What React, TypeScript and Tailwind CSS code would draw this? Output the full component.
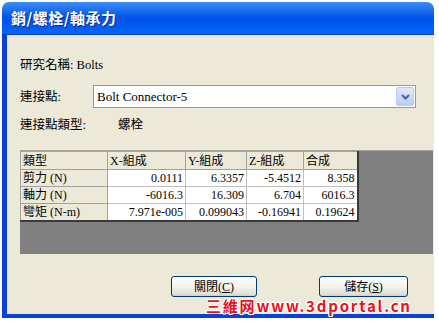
import React from 'react';

const ui = { fontFamily: '"Liberation Serif", "Noto Sans CJK TC", serif' };

// rows of the force table
const rows = [
  { name: '剪力 (N)', x: '0.0111', y: '6.3357', z: '-5.4512', r: '8.358' },
  { name: '軸力 (N)', x: '-6016.3', y: '16.309', z: '6.704', r: '6016.3' },
  { name: '彎矩 (N-m)', x: '7.971e-005', y: '0.099043', z: '-0.16941', r: '0.19624' },
];

const XpButton = ({ label, hot, width }: { label: string; hot: string; width: string }) => (
  <button
    className={`h-[21px] ${width} rounded-[3px] border border-[#003c74] bg-gradient-to-b from-white via-[#f4f3ee] to-[#dcd9cd] text-[12px] leading-none text-black shadow-[inset_0_-1px_0_#d6d0c5]`}
    style={ui}
  >
    {label}(<span className="underline">{hot}</span>)
  </button>
);

const App = () => {
  return (
    <div className="w-[439px] h-[322px] bg-white overflow-hidden relative" style={ui}>
      {/* Window */}
      <div className="ml-[2px] mt-[2px] w-[432px] h-[316px] flex flex-col overflow-hidden rounded-t-[7px]">
        {/* Title bar */}
        <div className="h-[33px] flex items-center pl-[9px] bg-gradient-to-b from-[#3b8cf5] via-[#0052e8] to-[#0864fa] border-b border-[#003fc8] shrink-0">
          <span
            className="text-white font-bold text-[15px] tracking-[0.5px]"
            style={{ fontFamily: '"Noto Sans CJK TC", sans-serif', textShadow: '1px 1px 0 #0a2a8a' }}
          >
            銷/螺栓/軸承力
          </span>
        </div>

        {/* Body with blue frame on left and bottom */}
        <div className="flex-1 flex flex-col border-l-[5px] border-b-[4px] border-[#0843d6] bg-[#ece9d8]">
          <div className="pl-[13px] pt-[23px] text-[12.5px] text-black leading-[14px]">研究名稱: Bolts</div>

          <div className="flex items-center pl-[13px] mt-[13px]">
            <span className="w-[73px] text-[12.5px] leading-[14px]">連接點:</span>
            <div className="h-[23px] w-[323px] border border-[#7f9db9] bg-white flex items-center justify-between pl-[3px] pr-[1px]">
              <span className="text-[13px]">Bolt Connector-5</span>
              <div className="w-[18px] h-[19px] rounded-[2px] border border-[#b8ccf0] bg-gradient-to-b from-[#dfe9fd] to-[#b5cdf7] flex items-center justify-center">
                <svg width="9" height="6" viewBox="0 0 9 6">
                  <path d="M1 1 L4.5 4.5 L8 1" stroke="#4d6185" strokeWidth="2" fill="none" />
                </svg>
              </div>
            </div>
          </div>

          <div className="flex items-center pl-[13px] mt-[10px] text-[12.5px] leading-[14px]">
            <span className="w-[98px]">連接點類型:</span>
            <span>螺栓</span>
          </div>

          {/* Grid area */}
          <div className="ml-[13px] mr-[1px] mt-[18px] h-[104px] bg-[#808080] border-t border-[#a8a498]">
            <table className="border-collapse text-[12px] leading-none border-r-2 border-b-2 border-[#3a3a3a] bg-white">
              <thead>
                <tr className="h-[18px] bg-[#ece9d8]">
                  <th className="w-[87px] border border-[#a0a0a0] text-left font-normal pl-[2px]">類型</th>
                  <th className="w-[78px] border border-[#a0a0a0] text-left font-normal pl-[2px]">X-組成</th>
                  <th className="w-[61px] border border-[#a0a0a0] text-left font-normal pl-[2px]">Y-組成</th>
                  <th className="w-[57px] border border-[#a0a0a0] text-left font-normal pl-[2px]">Z-組成</th>
                  <th className="w-[54px] border border-[#a0a0a0] text-left font-normal pl-[2px]">合成</th>
                </tr>
              </thead>
              <tbody>
                {rows.map((r) => (
                  <tr key={r.name} className="h-[17px]">
                    <td className="border border-[#a0a0a0] bg-[#ece9d8] pl-[2px]">{r.name}</td>
                    <td className="border border-[#c0c0c0] text-right pr-[2px]">{r.x}</td>
                    <td className="border border-[#c0c0c0] text-right pr-[2px]">{r.y}</td>
                    <td className="border border-[#c0c0c0] text-right pr-[2px]">{r.z}</td>
                    <td className="border border-[#c0c0c0] text-right pr-[2px]">{r.r}</td>
                  </tr>
                ))}
              </tbody>
            </table>
          </div>

          {/* Buttons */}
          <div className="flex pl-[164px] mt-[22px] gap-[62px]">
            <XpButton label="關閉" hot="C" width="w-[86px]" />
            <XpButton label="儲存" hot="S" width="w-[89px]" />
          </div>
        </div>
      </div>

      {/* Watermark */}
      <div
        className="absolute left-[206px] top-[298px] text-[15px] font-bold leading-none text-[#e8101a] tracking-[1.8px]"
        style={{
          fontFamily: '"Noto Sans CJK SC", sans-serif',
          textShadow: '1px 0 0 #fff, -1px 0 0 #fff, 0 1px 0 #fff, 0 -1px 0 #fff, 1px 1px 0 #fff, -1px -1px 0 #fff, 1px -1px 0 #fff, -1px 1px 0 #fff',
        }}
      >
        三維网www.3dportal.cn
      </div>
    </div>
  );
};

export default App;
